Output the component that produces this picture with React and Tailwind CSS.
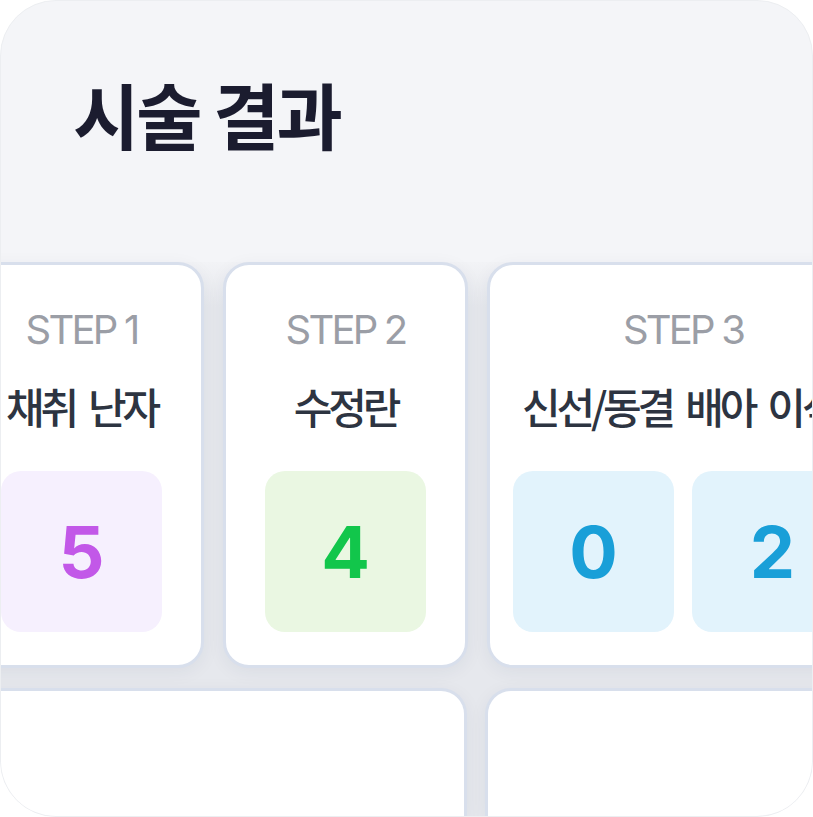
const KR = { fontFamily: '"Noto Sans CJK KR", "Noto Sans", sans-serif' };
const LATIN = { fontFamily: 'Inter, "Noto Sans", sans-serif' };

const steps = [
  {
    step: 'STEP 1',
    title: '채취 난자',
    width: 'w-[245px]',
    titlePad: 'px-[10px] text-center',
    values: [{ n: 5, box: 'bg-[#f6f0fe]', text: 'text-[#c258e8]' }],
  },
  {
    step: 'STEP 2',
    title: '수정란',
    width: 'w-[245px]',
    titlePad: 'px-[10px] text-center',
    values: [{ n: 4, box: 'bg-[#eaf7e2]', text: 'text-[#12c64b]' }],
  },
  {
    step: 'STEP 3',
    title: '신선/동결 배아 이식',
    width: 'w-[392px]',
    titlePad: 'pl-[32px] text-left',
    values: [
      { n: 0, box: 'bg-[#e2f3fc]', text: 'text-[#199fd8]' },
      { n: 2, box: 'bg-[#e2f3fc]', text: 'text-[#199fd8]' },
    ],
  },
];

function StepCard({ item }) {
  return (
    <div
      className={`${item.width} shrink-0 h-[406px] overflow-hidden rounded-[26px] border-[3px] border-[#d8dfec] bg-white shadow-[0_4px_18px_rgba(40,50,80,0.06)] pt-[45px]`}
    >
      <div style={LATIN} className="text-center text-[40px] leading-none tracking-[-0.07em] text-[#9b9ea6]">
        {item.step}
      </div>
      <div
        style={KR}
        className={`mt-[35px] ${item.titlePad} whitespace-nowrap text-[42px] leading-none tracking-[-0.1em] [word-spacing:8px] font-medium text-[#2d3441]`}
      >
        {item.title}
      </div>
      <div className={`mt-[44px] flex gap-[18px] ${item.values.length > 1 ? 'pl-[23px]' : 'justify-center'}`}>
        {item.values.map((v, i) => (
          <div
            key={i}
            className={`w-[161px] h-[161px] shrink-0 rounded-[20px] ${v.box} flex items-center justify-center`}
          >
            <span style={LATIN} className={`text-[72px] leading-none font-bold ${v.text}`}>
              {v.n}
            </span>
          </div>
        ))}
      </div>
    </div>
  );
}

export default function App() {
  return (
    <div className="w-[813px] h-[817px] bg-white">
      <div className="h-full rounded-[56px] overflow-hidden border border-[#eceef1] bg-[#f4f5f8] flex flex-col">
        <div className="h-[261px] shrink-0 pl-[72px] pt-[76px]">
          <h1 style={KR} className="text-[72px] leading-none font-bold tracking-[-0.04em] text-[#1b1c2f]">
            시술 결과
          </h1>
        </div>

        <div className="flex-1 flex flex-col gap-[20px] bg-[linear-gradient(to_bottom,#f2f3f6_0px,#e6e8ed_45px)]">
          <div className="flex gap-[19px] ml-[-42px]">
            {steps.map((s) => (
              <StepCard key={s.step} item={s} />
            ))}
          </div>

          <div className="flex-1 flex gap-[18px] ml-[-42px]">
            <div className="w-[508px] shrink-0 rounded-t-[26px] border-[3px] border-b-0 border-[#d8dfec] bg-white shadow-[0_4px_18px_rgba(40,50,80,0.06)]" />
            <div className="w-[400px] shrink-0 rounded-t-[26px] border-[3px] border-b-0 border-[#d8dfec] bg-white shadow-[0_4px_18px_rgba(40,50,80,0.06)]" />
          </div>
        </div>
      </div>
    </div>
  );
}
